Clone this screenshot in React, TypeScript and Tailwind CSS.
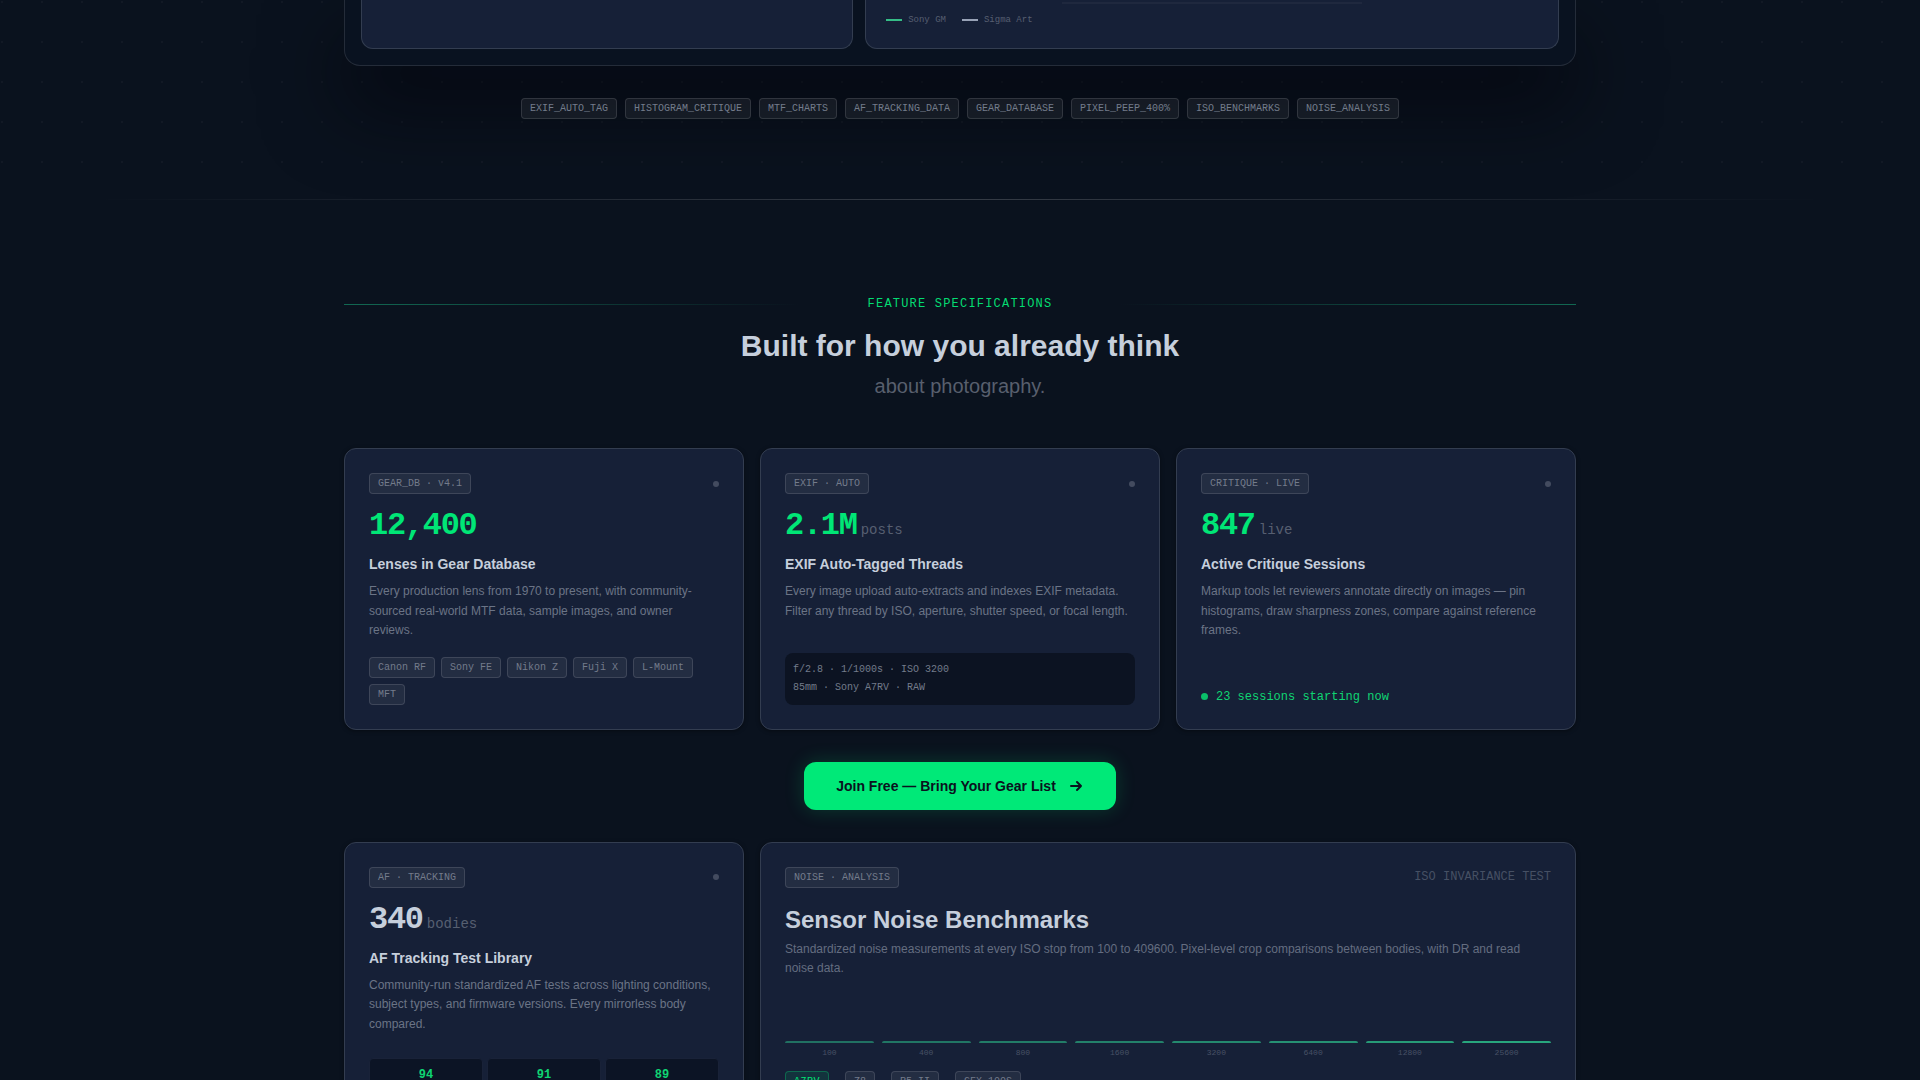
import type { ReactNode } from "react";

const MONO = "font-['Liberation_Mono',monospace]";

const capabilities = [
  "EXIF_AUTO_TAG",
  "HISTOGRAM_CRITIQUE",
  "MTF_CHARTS",
  "AF_TRACKING_DATA",
  "GEAR_DATABASE",
  "PIXEL_PEEP_400%",
  "ISO_BENCHMARKS",
  "NOISE_ANALYSIS",
];

const mounts = ["Canon RF", "Sony FE", "Nikon Z", "Fuji X", "L-Mount", "MFT"];

const isoStops = [
  { iso: "100", opacity: 0.45 },
  { iso: "400", opacity: 0.48 },
  { iso: "800", opacity: 0.51 },
  { iso: "1600", opacity: 0.54 },
  { iso: "3200", opacity: 0.58 },
  { iso: "6400", opacity: 0.63 },
  { iso: "12800", opacity: 0.68 },
  { iso: "25600", opacity: 0.74 },
];

function Tag({ children }: { children: ReactNode }) {
  return (
    <span
      className={`${MONO} rounded-sm border border-white/12 bg-white/6 px-2 py-0.5 text-[10px] leading-[15px] whitespace-nowrap text-[#737b8b]`}
    >
      {children}
    </span>
  );
}

function Card({ className = "", children }: { className?: string; children: ReactNode }) {
  return (
    <article
      className={`flex flex-col rounded-xl border border-[#333d50] bg-[#162037] p-6 shadow-[0_1px_4px_rgba(0,0,0,0.4)] ${className}`}
    >
      {children}
    </article>
  );
}

type StatCardProps = {
  tag: string;
  value: string;
  unit?: string;
  title: string;
  text: string;
  muted?: boolean;
  children: ReactNode;
};

function StatCard({ tag, value, unit, title, text, muted, children }: StatCardProps) {
  return (
    <Card>
      <div className="mb-4 flex items-center justify-between">
        <Tag>{tag}</Tag>
        <span className="size-1.5 rounded-full bg-[#434b5f]" />
      </div>
      <div className={`${MONO} mb-3 flex items-baseline gap-1 text-[32px] leading-8`}>
        <span className={muted ? "font-bold tracking-[-0.04em] text-[#c6cfdc]" : "font-bold tracking-[-0.04em] text-[#00e676]"}>
          {value}
        </span>
        {unit && <span className="text-sm leading-5 text-[#565f71]">{unit}</span>}
      </div>
      <h3 className="mb-2 text-sm leading-5 font-bold text-[#c6cfdc]">{title}</h3>
      <p className="text-xs leading-relaxed text-[#6b7486]">{text}</p>
      <div className="mt-auto pt-4">{children}</div>
    </Card>
  );
}

export default function App() {
  return (
    <main className="min-h-screen overflow-hidden bg-[#0a121e] font-['Liberation_Sans',Arial,sans-serif]">
      <section className="bg-[radial-gradient(circle_at_2px_2px,rgba(255,255,255,0.03)_1px,transparent_0)] bg-[size:40px_40px] pb-20">
        <div className="mx-auto max-w-7xl px-6">
          <div className="rounded-b-2xl border border-t-0 border-[#242c39] bg-[#091220] px-4 pb-4 shadow-[0_40px_80px_rgba(0,0,8,0.6)]">
            <div className="grid grid-cols-12 gap-3">
              <div className="col-span-5 rounded-b-xl border border-t-0 border-[#333d50] bg-[#162037]" />
              <div className="col-span-7 rounded-b-xl border border-t-0 border-[#333d50] bg-[#162037] px-5 pb-5">
                <div className="mx-auto mb-2 h-1 w-[300px] border-b-2 border-white/4" />
                <div className={`${MONO} flex gap-4 text-[9px] leading-4 text-[#565f71]`}>
                  <span className="flex items-center gap-1.5">
                    <span className="h-0.5 w-4 bg-[#35bd87]" />
                    Sony GM
                  </span>
                  <span className="flex items-center gap-1.5">
                    <span className="h-0.5 w-4 bg-[#98a2b6]" />
                    Sigma Art
                  </span>
                </div>
              </div>
            </div>
          </div>
          <div className="relative mt-8 flex flex-wrap justify-center gap-2">
            {capabilities.map((c) => (
              <Tag key={c}>{c}</Tag>
            ))}
          </div>
        </div>
      </section>

      <div className="h-px bg-linear-to-r from-transparent from-5% via-white/18 to-transparent to-95%" />

      <section className="mx-auto max-w-7xl px-6 py-24">
        <header className="mb-12 text-center">
          <div className="mb-4 flex items-center gap-4">
            <span className="h-px flex-1 bg-linear-to-r from-[#1de9a0]/40 to-transparent to-90%" />
            <span className={`${MONO} text-xs tracking-widest text-[#04dc72]`}>FEATURE SPECIFICATIONS</span>
            <span className="h-px flex-1 bg-linear-to-l from-[#1de9a0]/40 to-transparent to-90%" />
          </div>
          <h2 className="text-3xl leading-9 font-bold text-[#c6cfdc]">Built for how you already think</h2>
          <p className="mt-2 text-xl leading-7 text-[#585f6d]">about photography.</p>
        </header>

        <div className="grid grid-cols-3 gap-4">
          <StatCard
            tag="GEAR_DB · v4.1"
            value="12,400"
            title="Lenses in Gear Database"
            text="Every production lens from 1970 to present, with community-sourced real-world MTF data, sample images, and owner reviews."
          >
            <div className="flex flex-wrap gap-1.5">
              {mounts.map((m) => (
                <Tag key={m}>{m}</Tag>
              ))}
            </div>
          </StatCard>
          <StatCard
            tag="EXIF · AUTO"
            value="2.1M"
            unit="posts"
            title="EXIF Auto-Tagged Threads"
            text="Every image upload auto-extracts and indexes EXIF metadata. Filter any thread by ISO, aperture, shutter speed, or focal length."
          >
            <div className={`${MONO} rounded-lg bg-[#0c1322] p-2 text-[10px] leading-[18px] text-[#737b8b]`}>
              <div>f/2.8 · 1/1000s · ISO 3200</div>
              <div>85mm · Sony A7RV · RAW</div>
            </div>
          </StatCard>
          <StatCard
            tag="CRITIQUE · LIVE"
            value="847"
            unit="live"
            title="Active Critique Sessions"
            text="Markup tools let reviewers annotate directly on images — pin histograms, draw sharpness zones, compare against reference frames."
          >
            <div className={`${MONO} flex items-center gap-2 text-xs text-[#0fd573]`}>
              <span className="size-[7px] rounded-full bg-[#0abf69]" />
              23 sessions starting now
            </div>
          </StatCard>
        </div>

        <div className="my-8 flex justify-center">
          <button
            type="button"
            className="flex h-12 items-center gap-3 rounded-xl bg-[#00e978] px-8 text-sm font-bold text-[#0a121e] shadow-[0_0_20px_rgba(0,230,118,0.2)]"
          >
            Join Free — Bring Your Gear List
            <svg
              className="size-4"
              viewBox="0 0 16 16"
              fill="none"
              stroke="currentColor"
              strokeWidth="2"
              strokeLinecap="round"
              strokeLinejoin="round"
              aria-hidden="true"
            >
              <path d="M3 8h10M9 4l4 4-4 4" />
            </svg>
          </button>
        </div>

        <div className="grid grid-cols-3 gap-4">
          <StatCard
            muted
            tag="AF · TRACKING"
            value="340"
            unit="bodies"
            title="AF Tracking Test Library"
            text="Community-run standardized AF tests across lighting conditions, subject types, and firmware versions. Every mirrorless body compared."
          >
            <div className={`${MONO} mt-2 grid grid-cols-3 gap-1 text-center text-xs font-bold text-[#0fd573]`}>
              {["94", "91", "89"].map((score) => (
                <div key={score} className="rounded-sm border border-[#192238] bg-[#0c1425] pt-2 pb-6">
                  {score}
                </div>
              ))}
            </div>
          </StatCard>
          <Card className="col-span-2">
            <div className="mb-4 flex items-center justify-between">
              <Tag>NOISE · ANALYSIS</Tag>
              <span className={`${MONO} text-xs text-[#465064]`}>ISO INVARIANCE TEST</span>
            </div>
            <h3 className="mb-1 text-2xl leading-8 font-bold text-[#c6cfdc]">Sensor Noise Benchmarks</h3>
            <p className="text-xs leading-relaxed text-[#646d80]">
              Standardized noise measurements at every ISO stop from 100 to 409600. Pixel-level crop comparisons between
              bodies, with DR and read noise data.
            </p>
            <div className="mt-4 flex h-16 items-end gap-2">
              {isoStops.map(({ iso, opacity }) => (
                <div key={iso} className="flex flex-1 flex-col gap-1">
                  <div className="h-0.5 rounded-t-xs bg-[#2fd596]" style={{ opacity }} />
                  <div className={`${MONO} text-center text-[8px] leading-3 text-[#475065]`}>{iso}</div>
                </div>
              ))}
            </div>
            <div className="mt-3 flex gap-4">
              <span
                className={`${MONO} rounded-sm border border-[#00e676]/30 bg-[#00e676]/10 px-2 py-0.5 text-[10px] leading-[15px] tracking-wider text-[#00e676]`}
              >
                A7RV
              </span>
              <Tag>Z8</Tag>
              <Tag>R5 II</Tag>
              <Tag>GFX 100S</Tag>
            </div>
          </Card>
        </div>
      </section>
    </main>
  );
}
